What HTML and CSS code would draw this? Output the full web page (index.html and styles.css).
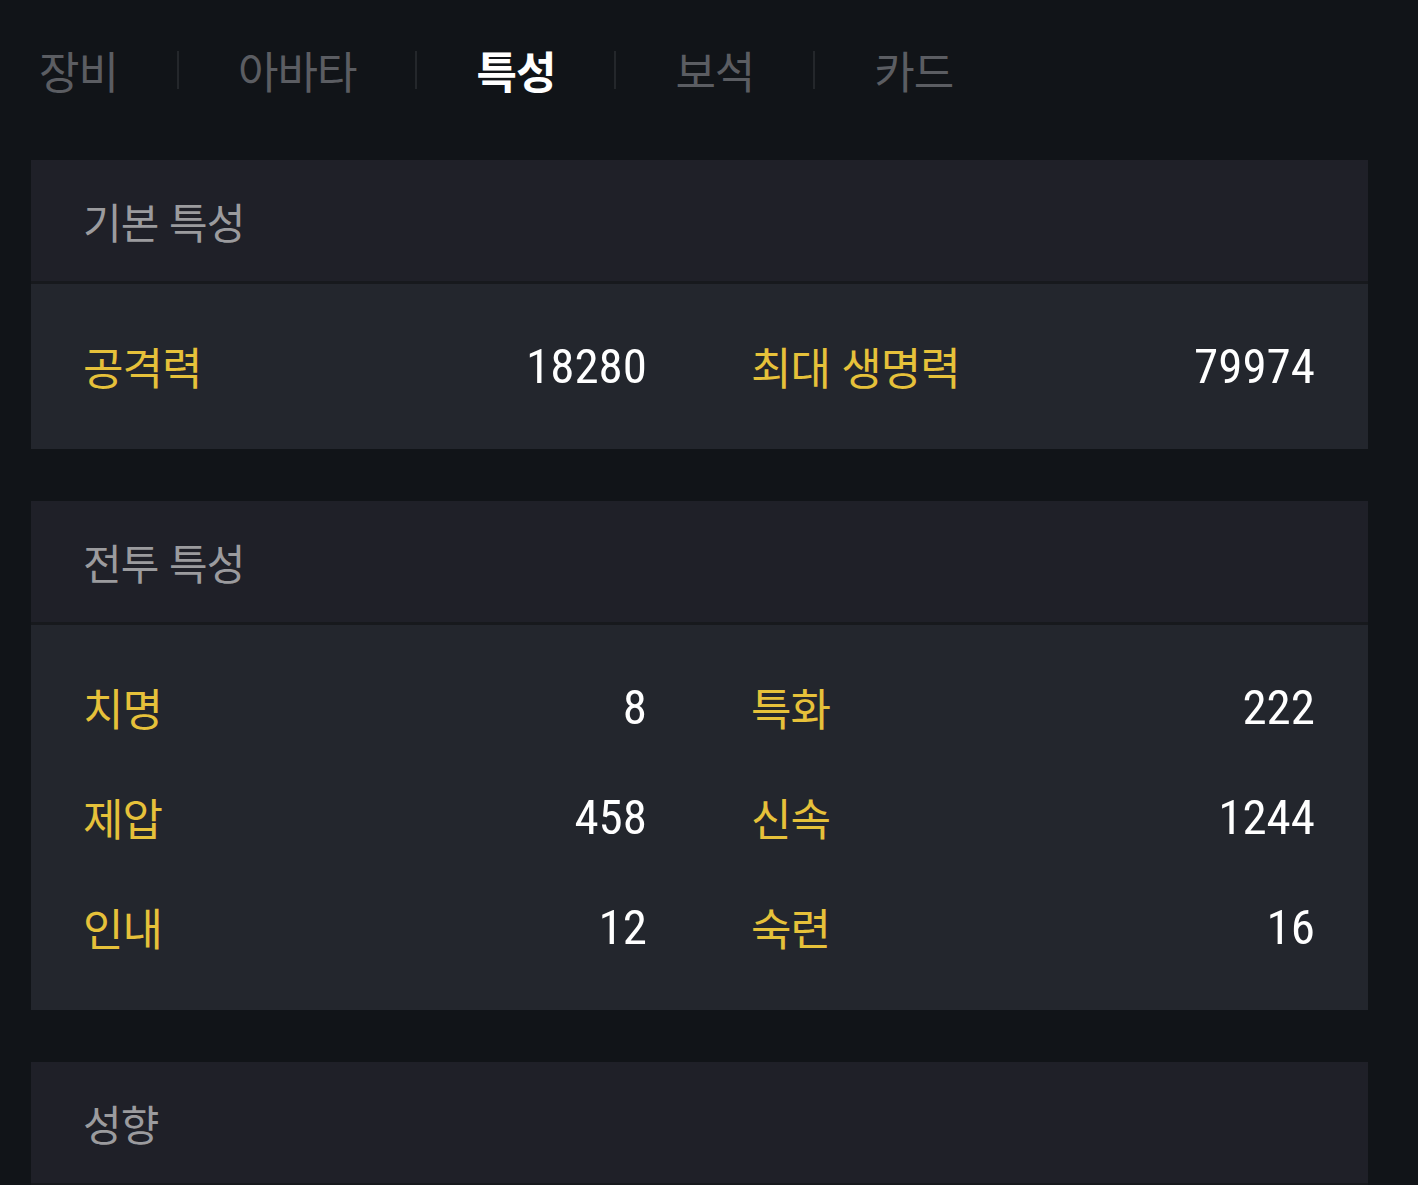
FILE: index.html
```html
<!DOCTYPE html>
<html lang="ko">
<head>
<meta charset="utf-8">
<title>특성</title>
<link rel="stylesheet" href="styles.css">
</head>
<body>
<div class="page">
  <nav class="tabs">
    <span class="tab">장비</span>
    <span class="sep"></span>
    <span class="tab">아바타</span>
    <span class="sep"></span>
    <span class="tab active">특성</span>
    <span class="sep"></span>
    <span class="tab">보석</span>
    <span class="sep"></span>
    <span class="tab">카드</span>
  </nav>

  <section class="card">
    <div class="card-head">기본 특성</div>
    <div class="card-body">
      <div class="stat"><span class="label">공격력</span><span class="value">18280</span></div>
      <div class="stat"><span class="label">최대 생명력</span><span class="value">79974</span></div>
    </div>
  </section>

  <section class="card">
    <div class="card-head">전투 특성</div>
    <div class="card-body">
      <div class="stat"><span class="label">치명</span><span class="value">8</span></div>
      <div class="stat"><span class="label">특화</span><span class="value">222</span></div>
      <div class="stat"><span class="label">제압</span><span class="value">458</span></div>
      <div class="stat"><span class="label">신속</span><span class="value">1244</span></div>
      <div class="stat"><span class="label">인내</span><span class="value">12</span></div>
      <div class="stat"><span class="label">숙련</span><span class="value">16</span></div>
    </div>
  </section>

  <section class="card">
    <div class="card-head">성향</div>
  </section>
</div>
</body>
</html>
```

FILE: styles.css
```css
html, body {
  margin: 0;
  padding: 0;
  background: #111418;
  height: 100%;
  overflow: hidden;
}

body {
  font-family: "Noto Sans CJK KR", "Noto Sans", sans-serif;
  color: #ffffff;
}

.page {
  padding: 0 50px 0 31px;
}

.tabs {
  display: flex;
  align-items: center;
  gap: 59px;
  height: 140px;
  margin-bottom: 20px;
  padding-left: 8px;
}

.tab {
  font-size: 44px;
  letter-spacing: -1px;
  line-height: 1;
  color: #5b5d62;
  white-space: nowrap;
}

.tab.active {
  color: #ffffff;
  font-weight: 700;
}

.sep {
  width: 2px;
  height: 38px;
  background: #24272b;
}

.card {
  margin-bottom: 52px;
}

.card-head {
  height: 121px;
  background: #1f2028;
  display: flex;
  align-items: center;
  padding-left: 52px;
  font-size: 42px;
  letter-spacing: -1px;
  color: #9b9b9e;
  border-bottom: 3px solid #17191d;
}

.card-body {
  background: #23262d;
  padding: 27px 53px 28px 52px;
  display: grid;
  grid-template-columns: 564px 564px;
  column-gap: 104px;
}

.stat {
  height: 110px;
  display: flex;
  align-items: center;
  justify-content: space-between;
}

.label {
  font-size: 44px;
  letter-spacing: -1px;
  color: #e6c13a;
  line-height: 1;
}

.value {
  font-family: "Liberation Sans Narrow", "Roboto Condensed", "Liberation Sans", sans-serif;
  font-size: 49px;
  color: #ffffff;
  line-height: 1;
}
```
